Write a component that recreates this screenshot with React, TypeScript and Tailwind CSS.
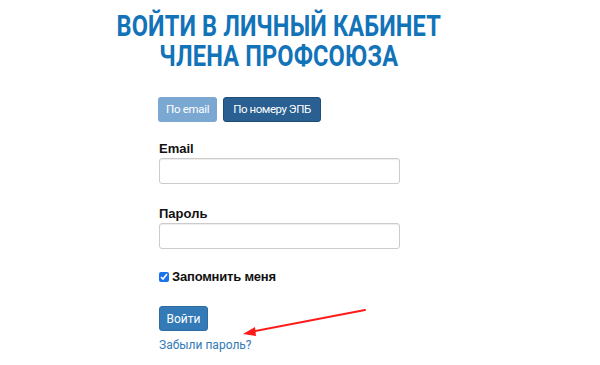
import React from "react";

export default function App() {
  return (
    <div className="relative w-[600px] h-[365px] bg-white overflow-hidden" style={{ fontFamily: '"Liberation Sans", Arial, sans-serif' }}>
      <div className="flex flex-col items-center pt-[11px]">
        <h1
          className="text-[#1273b9] font-bold text-[30px] leading-[30px] text-center uppercase tracking-[0.2px] scale-x-[0.785] origin-center ml-[-42px]"
          style={{ fontFamily: 'Roboto, sans-serif' }}
        >
          <div>ВОЙТИ В ЛИЧНЫЙ КАБИНЕТ</div>
          <div>ЧЛЕНА ПРОФСОЮЗА</div>
        </h1>
      </div>
      <div className="ml-[159px] w-[241px] mt-[26px] text-[13px]">
        <div className="flex gap-[6px] ml-[-1px]" style={{ fontFamily: 'Roboto, sans-serif' }}>
          <button className="h-[25px] px-[8px] rounded-[3px] bg-[#7aa8d3] text-white text-[11.5px] tracking-[-0.3px]">По email</button>
          <button className="h-[25px] px-[9px] rounded-[3px] bg-[#2a5f91] border border-[#204d74] text-white text-[11.5px] tracking-[-0.45px]">По номеру ЭПБ</button>
        </div>
        <div className="mt-[19px] font-bold text-[#111] leading-[15px]">Email</div>
        <input className="mt-[2px] block w-[241px] h-[26px] border border-[#ccc] rounded-[3px] shadow-[inset_0_1px_1px_rgba(0,0,0,0.075)]" />
        <div className="mt-[22px] font-bold text-[#111] leading-[15px]">Пароль</div>
        <input className="mt-[2px] block w-[241px] h-[26px] border border-[#ccc] rounded-[3px] shadow-[inset_0_1px_1px_rgba(0,0,0,0.075)]" />
        <label className="mt-[20px] flex items-center gap-[3px] font-bold text-[#111] leading-[15px] tracking-[-0.2px]">
          <input type="checkbox" defaultChecked className="w-[10px] h-[10px] m-0 accent-[#1a73e8]" />
          <span>Запомнить меня</span>
        </label>
        <button className="mt-[22px] block h-[25px] w-[49px] rounded-[3px] bg-[#337ab7] border border-[#2e6da4] text-white text-[12px]" style={{ fontFamily: 'Roboto, sans-serif' }}>Войти</button>
        <a className="mt-[7px] block text-[#337ab7] text-[12px] leading-[15px]" style={{ fontFamily: 'Roboto, sans-serif' }}>Забыли пароль?</a>
      </div>
      <svg className="absolute left-0 top-0 pointer-events-none" width="600" height="365">
        <line x1="365" y1="310" x2="250" y2="332" stroke="#ff1a1a" strokeWidth="2" strokeLinecap="round" />
        <polygon points="243,334 255,327 256,336" fill="#ff1a1a" />
      </svg>
    </div>
  );
}
